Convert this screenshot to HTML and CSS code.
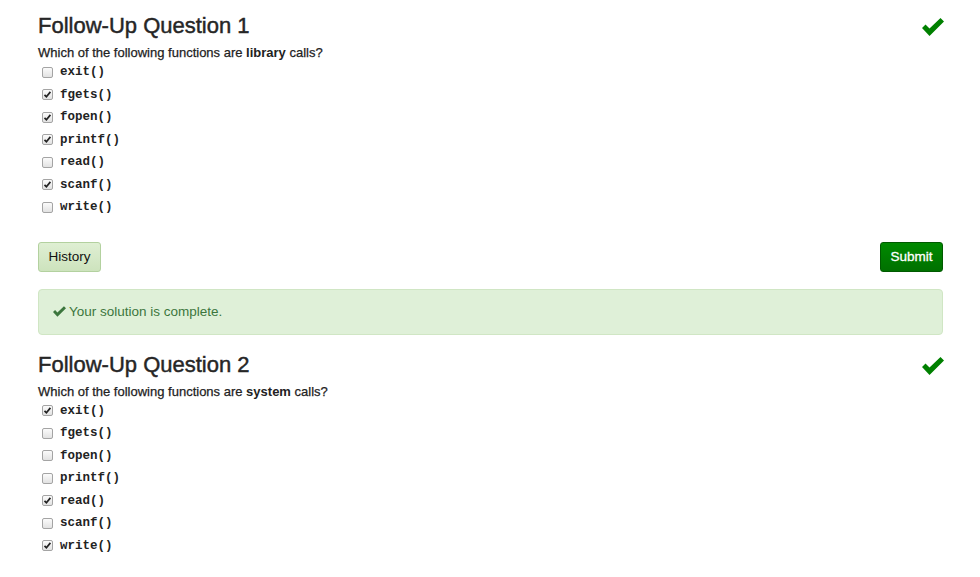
FILE: index.html
```html
<!DOCTYPE html>
<html lang="en">
<head>
<meta charset="utf-8">
<title>Follow-Up Questions</title>
<link rel="stylesheet" href="styles.css">
</head>
<body>
<main class="page">
  <section class="question">
    <div class="q-head">
      <h3 class="q-title">Follow-Up Question 1</h3>
      <svg class="ok-big" viewBox="0 0 22 18" width="22" height="18" aria-hidden="true"><polygon points="0,10 3.5,6.5 7.5,10.5 18.5,0 22,3.5 7.5,18" fill="#008000"/></svg>
    </div>
    <p class="prompt">Which of the following functions are <strong>library</strong> calls?</p>
    <ul class="options">
      <li><span class="cb"></span><code>exit()</code></li>
      <li><span class="cb on"><svg viewBox="0 0 11 11" width="11" height="11"><polyline points="2.5,5.8 4.4,7.8 8.4,2.9" fill="none" stroke="#222" stroke-width="1.7"/></svg></span><code>fgets()</code></li>
      <li><span class="cb on"><svg viewBox="0 0 11 11" width="11" height="11"><polyline points="2.5,5.8 4.4,7.8 8.4,2.9" fill="none" stroke="#222" stroke-width="1.7"/></svg></span><code>fopen()</code></li>
      <li><span class="cb on"><svg viewBox="0 0 11 11" width="11" height="11"><polyline points="2.5,5.8 4.4,7.8 8.4,2.9" fill="none" stroke="#222" stroke-width="1.7"/></svg></span><code>printf()</code></li>
      <li><span class="cb"></span><code>read()</code></li>
      <li><span class="cb on"><svg viewBox="0 0 11 11" width="11" height="11"><polyline points="2.5,5.8 4.4,7.8 8.4,2.9" fill="none" stroke="#222" stroke-width="1.7"/></svg></span><code>scanf()</code></li>
      <li><span class="cb"></span><code>write()</code></li>
    </ul>
    <div class="actions">
      <button class="btn btn-history" type="button">History</button>
      <button class="btn btn-submit" type="button">Submit</button>
    </div>
    <div class="alert">
      <svg class="ok-small" viewBox="0 0 22 18" width="13" height="11" aria-hidden="true"><polygon points="0,10 3.5,6.5 7.5,10.5 18.5,0 22,3.5 7.5,18" fill="#3c763d"/></svg>
      <span>Your solution is complete.</span>
    </div>
  </section>

  <section class="question">
    <div class="q-head">
      <h3 class="q-title">Follow-Up Question 2</h3>
      <svg class="ok-big" viewBox="0 0 22 18" width="22" height="18" aria-hidden="true"><polygon points="0,10 3.5,6.5 7.5,10.5 18.5,0 22,3.5 7.5,18" fill="#008000"/></svg>
    </div>
    <p class="prompt">Which of the following functions are <strong>system</strong> calls?</p>
    <ul class="options">
      <li><span class="cb on"><svg viewBox="0 0 11 11" width="11" height="11"><polyline points="2.5,5.8 4.4,7.8 8.4,2.9" fill="none" stroke="#222" stroke-width="1.7"/></svg></span><code>exit()</code></li>
      <li><span class="cb"></span><code>fgets()</code></li>
      <li><span class="cb"></span><code>fopen()</code></li>
      <li><span class="cb"></span><code>printf()</code></li>
      <li><span class="cb on"><svg viewBox="0 0 11 11" width="11" height="11"><polyline points="2.5,5.8 4.4,7.8 8.4,2.9" fill="none" stroke="#222" stroke-width="1.7"/></svg></span><code>read()</code></li>
      <li><span class="cb"></span><code>scanf()</code></li>
      <li><span class="cb on"><svg viewBox="0 0 11 11" width="11" height="11"><polyline points="2.5,5.8 4.4,7.8 8.4,2.9" fill="none" stroke="#222" stroke-width="1.7"/></svg></span><code>write()</code></li>
    </ul>
  </section>
</main>
</body>
</html>
```

FILE: styles.css
```css
html, body {
  margin: 0;
  padding: 0;
  background: #fff;
}
body {
  font-family: "Liberation Sans", Arial, Helvetica, sans-serif;
  font-size: 13px;
  color: #222;
  overflow: hidden;
}
.page {
  padding: 13px 37px 0 38px;
}
.question {
  display: flex;
  flex-direction: column;
}
.question + .question {
  margin-top: 17px;
}
.q-head {
  display: flex;
  justify-content: space-between;
  align-items: center;
}
.q-title {
  margin: 0;
  font-size: 22px;
  font-weight: 400;
  line-height: 26px;
  color: #262626;
  -webkit-text-stroke: 0.45px #262626;
}
.ok-big {
  margin-right: -1px;
  margin-top: 2px;
  display: block;
}
.prompt {
  margin: 5px 0 0;
  line-height: 18px;
  font-size: 13px;
  color: #222;
  -webkit-text-stroke: 0.25px #222;
}
.prompt strong {
  font-weight: 700;
  -webkit-text-stroke: 0;
}
.options {
  list-style: none;
  margin: -1px 0 0;
  padding: 0;
}
.options li {
  display: flex;
  align-items: center;
  height: 22.5px;
  padding-left: 4px;
  gap: 7px;
}
.cb {
  width: 11px;
  height: 11px;
  box-sizing: border-box;
  border: 1px solid #a4a4a4;
  border-radius: 2px;
  background: linear-gradient(#fbfbfb, #e2e2e2);
  position: relative;
  flex: none;
}
.cb svg {
  position: absolute;
  left: -1px;
  top: -1px;
}
.options code {
  font-family: "Liberation Mono", "Courier New", monospace;
  font-weight: 700;
  font-size: 12.5px;
  color: #222;
}
.actions {
  display: flex;
  justify-content: space-between;
  margin-top: 23px;
}
.btn {
  height: 30px;
  width: 63px;
  box-sizing: border-box;
  border-radius: 3px;
  font-family: "Liberation Sans", Arial, sans-serif;
  font-size: 13.5px;
  padding: 0;
}
.btn-history {
  color: #111;
  background: linear-gradient(#dfefd3, #cde3bd);
  border: 1px solid #b3d19f;
}
.btn-submit {
  color: #fff;
  background: linear-gradient(#008a00, #007000);
  border: 1px solid #005a00;
  -webkit-text-stroke: 0.3px #fff;
}
.alert {
  margin-top: 17px;
  height: 46px;
  box-sizing: border-box;
  display: flex;
  align-items: center;
  gap: 3px;
  padding: 0 14px;
  background: #dff0d8;
  border: 1px solid #d0e6c4;
  border-radius: 4px;
  color: #3c763d;
  font-size: 13.5px;
}
.ok-small {
  display: block;
}
```
